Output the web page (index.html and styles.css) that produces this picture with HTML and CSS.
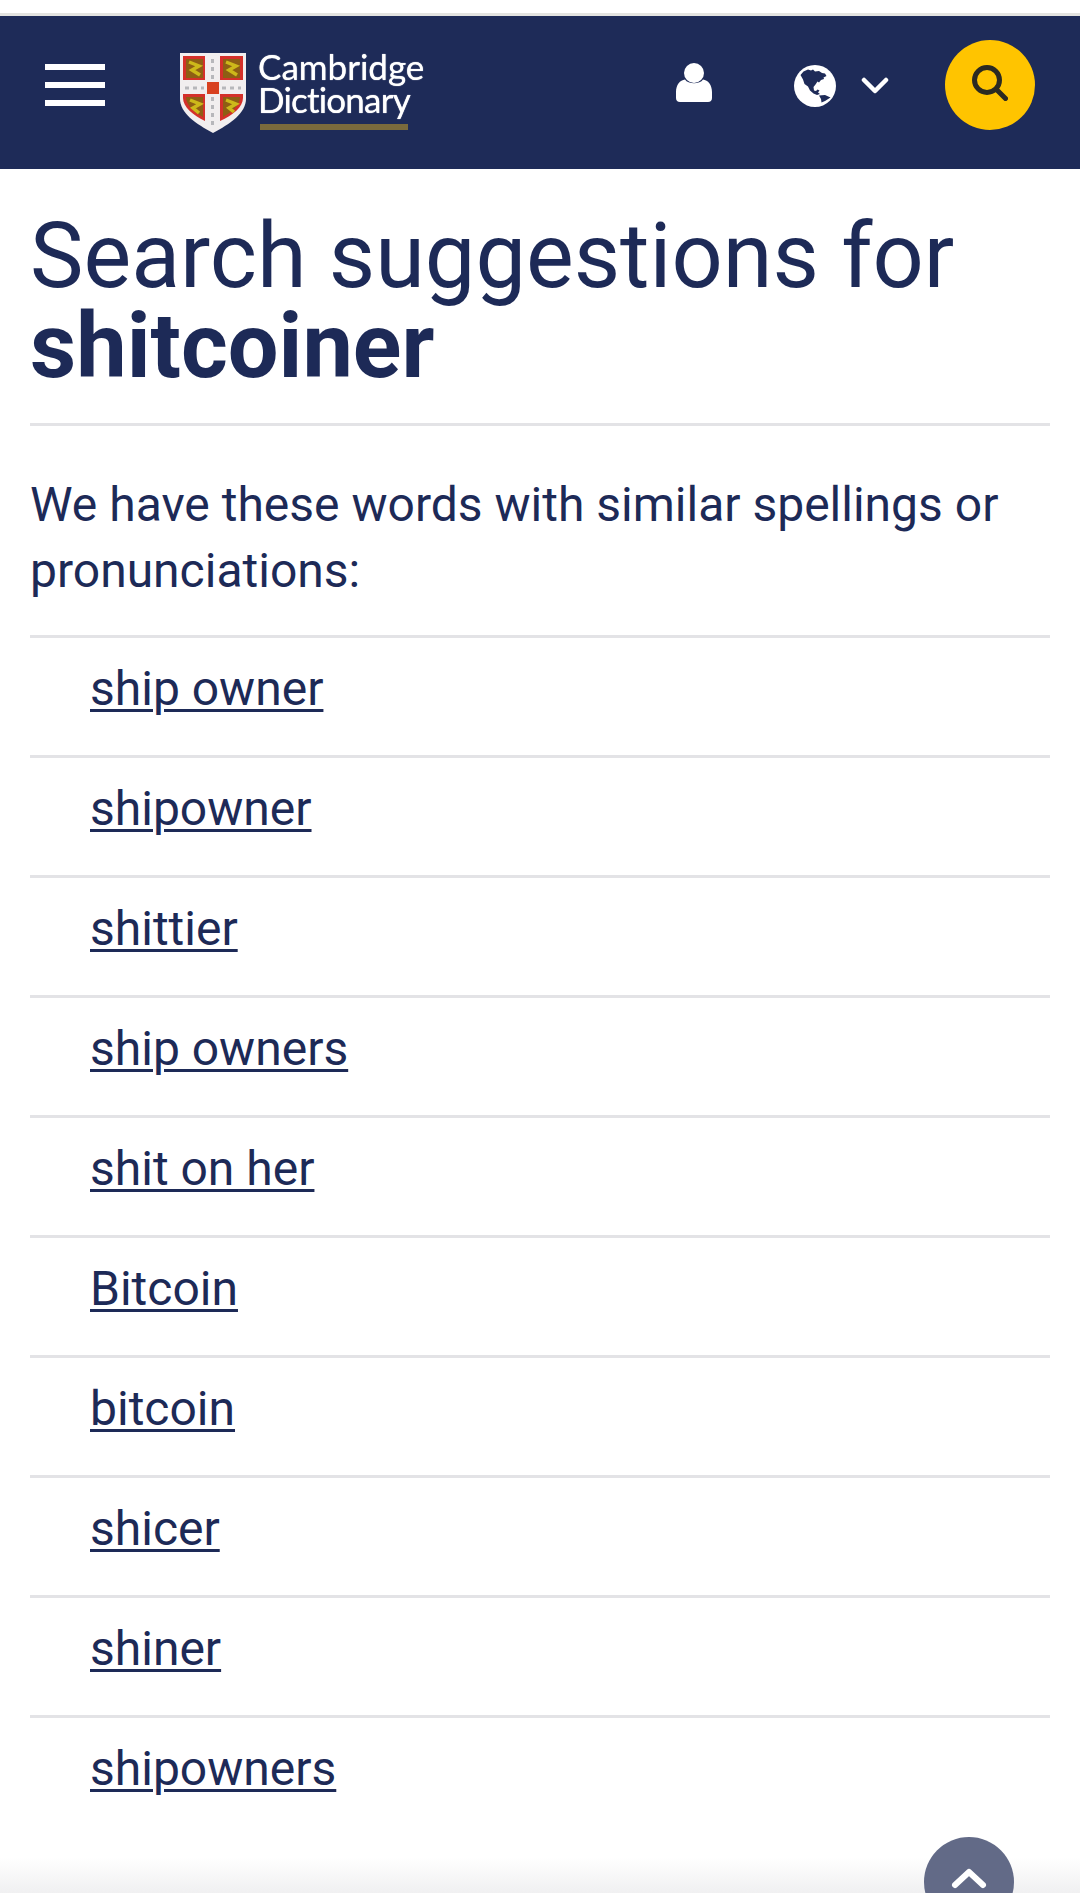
FILE: index.html
```html
<!DOCTYPE html>
<html lang="en">
<head>
<meta charset="utf-8">
<title>Search suggestions for shitcoiner</title>
<link rel="stylesheet" href="styles.css">
</head>
<body>
<header class="topbar">
  <button class="burger" aria-label="Menu"><span></span><span></span><span></span></button>
  <a class="logo" href="#">
    <svg class="shield" viewBox="0 0 66 80" aria-hidden="true">
      <path d="M0 0H66V46C66 60 50 71 33 80C16 71 0 60 0 46Z" fill="#f1eeef"/>
      <path d="M3 3H25V27H3ZM40 3H63V27H40ZM3 41H25V68C13 62 3 54 3 45ZM40 41H63V45C63 54 53 62 40 68Z" fill="#d4302a"/>
      <path d="M6 6H23V25H6ZM43 6H60V25H43ZM6 44H23V64C14 59 6 52 6 44ZM43 44H60C60 52 52 59 43 64Z" fill="#8e5e14"/>
      <path d="M9 9L19 13L12 17L20 22M46 9L56 13L49 17L57 22M10 47L20 51L13 55L19 60M46 47L56 51L49 55L54 59" stroke="#cdb81a" stroke-width="3.500" fill="none"/>
      <rect x="27" y="29" width="12" height="12" fill="#d8401f"/>
      <path d="M32.500 6V26M32.500 44V74M5 35H24M42 35H61" stroke="#b7b7bb" stroke-width="3" stroke-dasharray="4 4"/>
    </svg>
    <span class="wordmark"><span>Cambridge</span><span class="wordmark-second">Dictionary</span></span>
  </a>
  <div class="tools">
    <svg class="user" viewBox="0 0 36 39" aria-hidden="true">
      <circle cx="18" cy="10" r="10" fill="#fff"/>
      <path d="M9 16.500C12 21.500 24 21.500 27 16.500C32 17 36 22 36 29V35C36 37.500 34.500 39 32 39H4C1.500 39 0 37.500 0 35V29C0 22 4 17 9 16.500Z" fill="#fff"/>
    </svg>
    <svg class="globe" viewBox="0 0 42 42" aria-hidden="true">
      <circle cx="21" cy="21" r="21" fill="#fff"/>
      <path d="M6.500 10L9.500 6.500L14 4.500L17 5.500L19 4.500L21 6.500L25 6L28 8L31 8.500L32.500 11L29.500 12.500L30 14L27 15L25 17.500L23.500 16.500L21.500 19.500L19.500 22L20 25.500L22 26L23.500 24.500L25.500 25.500L24 27.500L26 29L23 30L19.500 28.500L16 25.500L14 21.500L10.500 19L9 14.500Z" fill="#1e2b58"/>
      <path d="M25 30.500L31 30L36.500 32.500L31 36L27.500 37.500L27 34Z" fill="#1e2b58"/>
    </svg>
    <svg class="chevron" viewBox="0 0 28 18" aria-hidden="true">
      <path d="M3 4L14 15L25 4" fill="none" stroke="#fff" stroke-width="4.500" stroke-linecap="round" stroke-linejoin="round"/>
    </svg>
    <button class="search-btn" aria-label="Search">
      <svg viewBox="0 0 36 36" aria-hidden="true">
        <circle cx="15" cy="15" r="12.500" fill="none" stroke="#2b2a22" stroke-width="5"/>
        <path d="M25 25L33.500 33.500" stroke="#2b2a22" stroke-width="5" stroke-linecap="round"/>
      </svg>
    </button>
  </div>
</header>
<main class="content">
  <h1 class="title">Search suggestions for <strong>shitcoiner</strong></h1>
  <p class="intro">We have these words with similar spellings or pronunciations:</p>
  <ul class="results">
    <li><a href="#">ship owner</a></li>
    <li><a href="#">shipowner</a></li>
    <li><a href="#">shittier</a></li>
    <li><a href="#">ship owners</a></li>
    <li><a href="#">shit on her</a></li>
    <li><a href="#">Bitcoin</a></li>
    <li><a href="#">bitcoin</a></li>
    <li><a href="#">shicer</a></li>
    <li><a href="#">shiner</a></li>
    <li><a href="#">shipowners</a></li>
  </ul>
</main>
<div class="bottom-shade"></div>
<button class="to-top" aria-label="Back to top">
  <svg viewBox="0 0 36 22" aria-hidden="true">
    <path d="M4 18L18 5L32 18" fill="none" stroke="#fff" stroke-width="6" stroke-linecap="round" stroke-linejoin="round"/>
  </svg>
</button>
</body>
</html>
```
FILE: styles.css
```css
html, body {
  margin: 0;
  padding: 0;
  background: #fff;
}
body {
  height: 1893px;
  overflow: hidden;
  position: relative;
  font-family: Roboto, "Liberation Sans", sans-serif;
  color: #1d2a57;
}
button {
  border: 0;
  padding: 0;
  background: none;
}
.topbar {
  box-sizing: border-box;
  margin-top: 13px;
  height: 156px;
  border-top: 3px solid #e3e3e0;
  background: #1e2b58;
  display: flex;
  align-items: flex-start;
  padding: 24px 45px 0;
}
.burger {
  width: 60px;
  margin-top: 24px;
  display: flex;
  flex-direction: column;
  gap: 12px;
}
.burger span {
  display: block;
  height: 6px;
  width: 60px;
  background: #fff;
}
.logo {
  margin-left: 75px;
  margin-top: 13px;
  display: flex;
  align-items: flex-start;
  gap: 12px;
  text-decoration: none;
  color: #fff;
  filter: blur(0.7px);
}
.shield {
  width: 66px;
  height: 80px;
  display: block;
}
.wordmark {
  display: flex;
  flex-direction: column;
  margin-top: -3px;
  font-family: Lato, sans-serif;
  font-size: 35px;
  line-height: 33px;
  color: #fff;
  text-shadow: 0 0 1px #fff;
}
.wordmark-second {
  letter-spacing: -0.8px;
}
.wordmark::after {
  content: "";
  height: 6px;
  width: 148px;
  margin-top: 8px;
  margin-left: 2px;
  background: #7a6a3c;
}
.tools {
  margin-left: auto;
  display: flex;
  align-items: center;
  height: 90px;
}
.user {
  width: 36px;
  height: 39px;
  margin-top: -6px;
}
.globe {
  width: 42px;
  height: 42px;
  margin-left: 82px;
  margin-top: 1px;
}
.chevron {
  width: 28px;
  height: 18px;
  margin-left: 25px;
}
.search-btn {
  width: 90px;
  height: 90px;
  margin-left: 56px;
  border-radius: 50%;
  background: #ffc400;
  display: flex;
  align-items: center;
  justify-content: center;
}
.search-btn svg {
  width: 36px;
  height: 36px;
  margin-top: -4px;
}
.content {
  padding: 43px 30px 0;
}
.title {
  margin: 0;
  padding-bottom: 31px;
  border-bottom: 3px solid #e3e3e6;
  font-size: 90px;
  line-height: 90px;
  font-weight: 400;
}
.title strong {
  display: block;
  font-weight: 700;
}
.intro {
  margin: 0;
  padding: 46px 0 31px;
  font-size: 48px;
  line-height: 66px;
}
.results {
  list-style: none;
  margin: 0;
  padding: 0;
}
.results li {
  height: 117px;
  border-top: 3px solid #e3e3e6;
  padding-left: 60px;
  font-size: 48px;
  line-height: 101px;
}
.results a {
  color: inherit;
  text-decoration-thickness: 3px;
  text-underline-offset: 4px;
}
.bottom-shade {
  position: absolute;
  left: 0;
  right: 0;
  bottom: 0;
  height: 36px;
  background: linear-gradient(to bottom, rgba(230, 230, 232, 0), rgba(230, 230, 232, 0.6));
}
.to-top {
  position: absolute;
  left: 924px;
  top: 1837px;
  width: 90px;
  height: 90px;
  border-radius: 50%;
  background: #626a87;
  display: flex;
  justify-content: center;
  padding-top: 30px;
}
.to-top svg {
  width: 36px;
  height: 22px;
}
```
